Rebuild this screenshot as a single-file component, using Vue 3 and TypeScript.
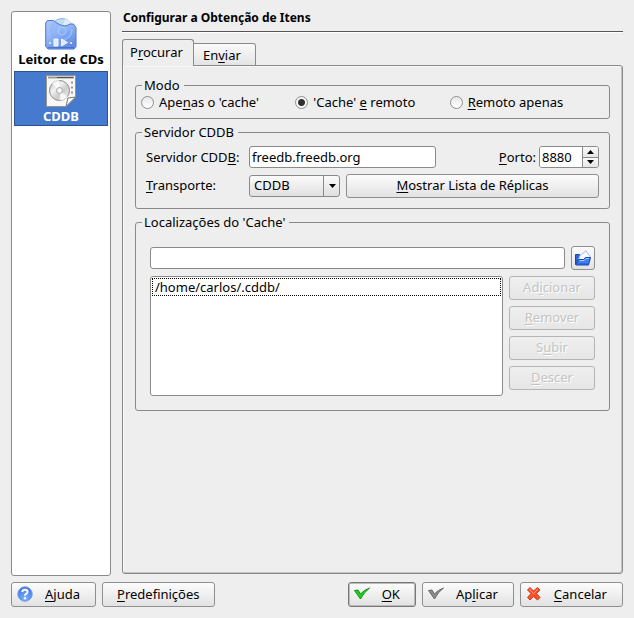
<script setup lang="ts">
import { ref } from 'vue'

interface Mnemonic {
  before: string
  key: string
  after: string
}

interface ModeOption extends Mnemonic {
  value: string
}

const modes: ModeOption[] = [
  { value: 'cache', before: 'Ape', key: 'n', after: "as o 'cache'" },
  { value: 'both', before: "'Cache' ", key: 'e', after: ' remoto' },
  { value: 'remote', before: '', key: 'R', after: 'emoto apenas' },
]

const listActions: Mnemonic[] = [
  { before: 'Ad', key: 'i', after: 'cionar' },
  { before: '', key: 'R', after: 'emover' },
  { before: 'S', key: 'u', after: 'bir' },
  { before: '', key: 'D', after: 'escer' },
]

const mode = ref('both')
const server = ref('freedb.freedb.org')
const port = ref(8880)
const transport = ref('CDDB')
const newPath = ref('')
const paths = ref<string[]>(['/home/carlos/.cddb/'])
</script>

<template>
  <div class="dialog">
    <div class="content">
      <nav class="sidebar">
        <button type="button" class="page">
          <svg width="32" height="32" viewBox="0 0 32 32" aria-hidden="true">
            <defs>
              <linearGradient id="folder" x1="0" y1="0" x2="0.5" y2="1">
                <stop offset="0" stop-color="#9fbcf8" />
                <stop offset="0.5" stop-color="#86adf6" />
                <stop offset="1" stop-color="#4a7be0" />
              </linearGradient>
            </defs>
            <circle cx="17" cy="12" r="11.500" fill="#c3ddf5" stroke="#8fb3e2" />
            <path d="M17 12 20 1q6 1 8 6z" fill="#e6f3fc" opacity=".8" />
            <path d="M.7 5 2.500 2.500H8.500L11 4.500q7 4.500 11 3l3-1.500h3.500L31 9.500V28.500L29 31H3L.7 28.500Z" fill="url(#folder)" fill-opacity=".86" stroke="#4d79cf" />
            <circle cx="17" cy="13" r="4" fill="none" stroke="#bcd5ff" opacity=".6" />
            <path d="M27 11q0 9-9 11" fill="none" stroke="#bcd5ff" stroke-width="2" opacity=".45" />
            <path d="M3 29.500H29" stroke="#315fba" opacity=".6" />
            <path d="M9 21h4v7H9zM16.500 21l6 3.500-6 3.500z" fill="#dfe9ff" stroke="#f2f6ff" />
            <path d="M4 24h2v2H4zM25 24h2v2h-2z" fill="#d5e3ff" />
          </svg>
          <span>Leitor de CDs</span>
        </button>
        <button type="button" class="page current" aria-current="page">
          <svg width="32" height="32" viewBox="0 0 32 32" aria-hidden="true">
            <defs>
              <linearGradient id="disc" x1="0" y1="0" x2="1" y2="1">
                <stop offset="0" stop-color="#b4b4b4" />
                <stop offset=".35" stop-color="#f2f2f2" />
                <stop offset=".6" stop-color="#cccccc" />
                <stop offset="1" stop-color="#f7f7f7" />
              </linearGradient>
            </defs>
            <path d="M1.500.5h29V22l-9.500 9.500H1.500Z" fill="#f7f7f5" stroke="#98948c" />
            <path d="M3 2.500h26" stroke="#999" stroke-width="2" />
            <path d="M12 2.500h16" stroke="#555" />
            <path d="M26 7.500h2M26 12.500h2M26 17.500h2" stroke="#999" stroke-width="2" />
            <circle cx="14.500" cy="15.500" r="10" fill="url(#disc)" stroke="#8c8c8c" />
            <path d="M14.500 15.500 7 9q3-4 7-4zM14.500 15.500l8 6q-3 4-7 4z" fill="#fff" opacity=".75" />
            <circle cx="14.500" cy="15.500" r="3" fill="#f0f0f0" stroke="#aaa" />
            <circle cx="14.500" cy="15.500" r="1" fill="#fff" />
            <path d="M21 31.500 23 23l7.500-1Z" fill="#fff" stroke="#777" stroke-linejoin="round" />
          </svg>
          <span>CDDB</span>
        </button>
      </nav>

      <main class="main">
        <h1>Configurar a Obtenção de Itens</h1>
        <div class="tabs" role="tablist">
          <button type="button" role="tab" class="tab active" aria-selected="true">P<u>r</u>ocurar</button>
          <button type="button" role="tab" class="tab" aria-selected="false">En<u>v</u>iar</button>
        </div>
        <div class="panel" role="tabpanel">
          <fieldset>
            <legend>Modo</legend>
            <div class="modes">
              <label v-for="m in modes" :key="m.value" class="mode">
                <input v-model="mode" type="radio" name="mode" :value="m.value" />
                <span>{{ m.before }}<u>{{ m.key }}</u>{{ m.after }}</span>
              </label>
            </div>
          </fieldset>

          <fieldset>
            <legend>Servidor CDDB</legend>
            <div class="server">
              <label class="caption" for="server">Servidor CDD<u>B</u>:</label>
              <div class="line spread">
                <input id="server" v-model="server" type="text" class="field host" />
                <div class="port">
                  <label for="port"><u>P</u>orto:</label>
                  <div class="spin">
                    <input id="port" v-model.number="port" type="text" inputmode="numeric" />
                    <div class="steps">
                      <button type="button" aria-label="Aumentar" @click="port++">
                        <svg width="7" height="4" viewBox="0 0 7 4"><path d="M3.500 0 7 4H0Z" /></svg>
                      </button>
                      <button type="button" aria-label="Diminuir" @click="port--">
                        <svg width="7" height="4" viewBox="0 0 7 4"><path d="M0 0H7L3.500 4Z" /></svg>
                      </button>
                    </div>
                  </div>
                </div>
              </div>
              <label class="caption" for="transport"><u>T</u>ransporte:</label>
              <div class="line">
                <div class="combo">
                  <select id="transport" v-model="transport">
                    <option>CDDB</option>
                    <option>HTTP</option>
                  </select>
                  <svg width="7" height="4" viewBox="0 0 7 4" aria-hidden="true"><path d="M0 0H7L3.500 4Z" /></svg>
                </div>
                <button type="button" class="btn grow"><span><u>M</u>ostrar Lista de Réplicas</span></button>
              </div>
            </div>
          </fieldset>

          <fieldset>
            <legend>Localizações do 'Cache'</legend>
            <div class="cache">
              <div class="line">
                <input v-model="newPath" type="text" class="field grow" aria-label="Localização" />
                <button type="button" class="btn open" aria-label="Abrir pasta">
                  <svg width="16" height="16" viewBox="0 0 16 16" aria-hidden="true">
                    <path d="M.5 14.500V4.500h4L6 6h8v5Z" fill="#2f66d6" stroke="#1c46ad" />
                    <path d="M3.500 9.500 5 5.500 11 .8 15 6.500 13 10Z" fill="#f6f9ff" stroke="#a9bde2" />
                    <path d="M1 15 3.500 9.500H8.500L10.500 7.500H15.500L13.500 15Z" fill="#3f80ee" stroke="#1744b4" stroke-linejoin="round" />
                    <path d="M4.500 10.500H9L11 8.500H14" fill="none" stroke="#a5ccff" />
                    <path d="M2.500 14H13" stroke="#1f55c8" />
                  </svg>
                </button>
              </div>
              <div class="line stretch">
                <ul class="list" role="listbox" aria-label="Localizações do 'Cache'">
                  <li v-for="p in paths" :key="p" role="option">{{ p }}</li>
                </ul>
                <div class="actions">
                  <button v-for="a in listActions" :key="a.key" type="button" class="btn" disabled>
                    <span>{{ a.before }}<u>{{ a.key }}</u>{{ a.after }}</span>
                  </button>
                </div>
              </div>
            </div>
          </fieldset>
        </div>
      </main>
    </div>

    <footer class="footer">
      <button type="button" class="btn cmd">
        <svg width="16" height="16" viewBox="0 0 16 16" aria-hidden="true">
          <defs>
            <radialGradient id="help" cx=".5" cy=".8" r=".8">
              <stop offset="0" stop-color="#79b2ff" />
              <stop offset="1" stop-color="#3f70e6" />
            </radialGradient>
          </defs>
          <circle cx="8" cy="8" r="7.200" fill="url(#help)" stroke="#6f97e6" />
          <path d="M5.300 6Q5.500 3.800 8 3.800T10.500 6Q10.500 7.200 9 8 8 8.600 8 9.800" fill="none" stroke="#fff" stroke-width="2" />
          <circle cx="8" cy="12.200" r="1.200" fill="#fff" />
        </svg>
        <span><u>A</u>juda</span>
      </button>
      <button type="button" class="btn plain"><span><u>P</u>redefinições</span></button>
      <div class="spacer"></div>
      <button type="button" class="btn cmd default">
        <svg width="16" height="16" viewBox="0 0 16 16" aria-hidden="true">
          <path d="M.5 4.500 4 4l2.500 4Q10 4 15.500 2 10 6 6.500 13Z" fill="#1bd51b" stroke="#138c13" stroke-linejoin="round" />
        </svg>
        <span><u>O</u>K</span>
      </button>
      <button type="button" class="btn cmd">
        <svg width="16" height="16" viewBox="0 0 16 16" aria-hidden="true">
          <path d="M.5 4.500 4 4l2.500 4Q10 4 15.500 2 10 6 6.500 13Z" fill="#8c8c8c" stroke="#666" stroke-linejoin="round" />
        </svg>
        <span>Ap<u>l</u>icar</span>
      </button>
      <button type="button" class="btn cmd">
        <svg width="16" height="16" viewBox="0 0 16 16" aria-hidden="true">
          <path d="M1.500 4 4 1.500 7.500 5 11.500 1.500 14 4 10.500 7.500 14 11.500 11.500 14 7.500 10.500 4 14 1.500 11.500 5 7.500Z" fill="#ff5028" stroke="#d5391b" stroke-linejoin="round" />
          <path d="M3.500 3.500 7.500 7.500 12 3" fill="none" stroke="#ff9d78" />
        </svg>
        <span><u>C</u>ancelar</span>
      </button>
    </footer>
  </div>
</template>

<style>
body {
  background: #eeeeee;
}
</style>

<style scoped>
.dialog,
.dialog * {
  box-sizing: border-box;
}

.dialog {
  display: flex;
  flex-direction: column;
  gap: 6px;
  min-height: 100vh;
  padding: 11px;
  background: #eeeeee;
  color: #000;
  font: 13px/18px "Noto Sans", "DejaVu Sans", sans-serif;
  white-space: nowrap;
}

button,
input,
select {
  margin: 0;
  padding: 0;
  font: inherit;
  color: inherit;
}

u {
  text-underline-offset: 2px;
  text-decoration-skip-ink: none;
}

.content {
  display: flex;
  flex: 1;
  gap: 11px;
}

.sidebar {
  display: flex;
  flex-direction: column;
  flex: none;
  width: 100px;
  padding: 2px;
  border: 1px solid #8a8a8a;
  border-radius: 3px;
  background: #fff;
}

.page {
  display: flex;
  flex-direction: column;
  align-items: center;
  height: 57px;
  padding-top: 4px;
  border: 0;
  background: none;
  font-weight: bold;
}

.page.current {
  height: 55px;
  padding-top: 3px;
  border: 1px solid #2e5389;
  background: #457acf;
  color: #fff;
}

.main {
  display: flex;
  flex-direction: column;
  flex: 1;
  min-width: 0;
  padding-bottom: 2px;
}

h1 {
  margin: 0 0 7px;
  padding: 0 1px 6px;
  border-bottom: 1px solid #555;
  box-shadow: 0 1px #fff;
  font-size: 12px;
  line-height: 14px;
}

.tabs {
  display: flex;
  align-items: flex-end;
}

.tab {
  height: 23px;
  margin-bottom: -1px;
  padding: 0 14px 0 9px;
  border: 1px solid #8a8a8a;
  border-left: 0;
  border-radius: 0 3px 0 0;
  background: linear-gradient(#fafafa, #e4e4e4);
}

.tab.active {
  z-index: 1;
  height: 27px;
  padding: 0 10px 2px 7px;
  border-left: 1px solid #8a8a8a;
  border-bottom: 0;
  border-radius: 3px 3px 0 0;
  background: #eeeeee;
}

.panel {
  display: flex;
  flex-direction: column;
  flex: 1;
  gap: 4px;
  padding: 10px 12px;
  border: 1px solid #8a8a8a;
  border-radius: 0 3px 3px 3px;
  box-shadow: inset -1px -1px #c4c4c4, inset 1px 1px #f8f8f8;
}

fieldset {
  min-width: 0;
  margin: 0;
  padding: 0;
  border: 1px solid #8a8a8a;
  border-radius: 3px;
}

legend {
  margin-left: 6px;
  padding: 0 4px 0 2px;
}

.modes {
  display: grid;
  grid-template-columns: repeat(3, 1fr);
  height: 24px;
  padding: 0 5px;
}

.mode {
  display: flex;
  align-items: center;
  gap: 5px;
  height: 16px;
}

input[type="radio"] {
  appearance: none;
  width: 13px;
  height: 13px;
  border: 1px solid #8f8f8f;
  border-radius: 50%;
  background: linear-gradient(#e8e8e8, #fff);
}

input[type="radio"]:checked {
  background: radial-gradient(circle, #303030 3px, #f6f6f6 4px);
}

.server {
  display: grid;
  grid-template-columns: 103px 1fr;
  row-gap: 6px;
  padding: 5px 10px 10px;
}

.caption {
  line-height: 22px;
}

.line {
  display: flex;
  align-items: center;
  gap: 6px;
}

.spread {
  justify-content: space-between;
}

.stretch {
  align-items: stretch;
}

.grow {
  flex: 1;
  min-width: 0;
}

.field {
  height: 22px;
  padding: 0 2px;
  border: 1px solid #8a8a8a;
  border-radius: 3px;
  background: #fff;
}

.host {
  width: 187px;
}

.port {
  display: flex;
  align-items: center;
  gap: 3px;
}

.spin {
  display: flex;
  width: 60px;
  height: 22px;
  border: 1px solid #8a8a8a;
  border-radius: 3px;
  overflow: hidden;
}

.spin input {
  flex: 1;
  min-width: 0;
  padding: 0 2px;
  border: 0;
  background: #fff;
}

.steps {
  display: flex;
  flex-direction: column;
  width: 16px;
  border-left: 1px solid #8a8a8a;
}

.steps button {
  display: flex;
  flex: 1;
  align-items: center;
  justify-content: center;
  border: 0;
  background: linear-gradient(#fafafa, #e6e6e6);
}

.steps button + button {
  border-top: 1px solid #8a8a8a;
}

.combo {
  display: grid;
  grid-template-columns: 1fr 16px;
  align-items: center;
  justify-items: center;
  width: 91px;
}

.combo select {
  grid-area: 1 / 1 / 2 / 3;
  appearance: none;
  width: 100%;
  height: 22px;
  padding: 0 0 2px 4px;
  border: 1px solid #8a8a8a;
  border-radius: 3px;
  background: linear-gradient(#8a8a8a, #8a8a8a) right 15px top / 1px 100% no-repeat, linear-gradient(#fbfbfb, #e0e0e0);
}

.combo svg {
  grid-area: 1 / 2;
  pointer-events: none;
}

.btn {
  display: flex;
  align-items: center;
  justify-content: center;
  height: 24px;
  padding-bottom: 2px;
  border: 1px solid #8f8f8f;
  border-radius: 3px;
  background: linear-gradient(#fcfcfc, #e2e2e2);
}

.btn:disabled {
  border-color: #b4b4b4;
  background: linear-gradient(#efefef, #e6e6e6);
  color: #c4c4c4;
  text-shadow: 1px 1px #fff;
}

.cache {
  display: flex;
  flex-direction: column;
  gap: 6px;
  padding: 15px 14px 14px;
}

.open {
  width: 24px;
  padding: 0;
}

.list {
  flex: 1;
  min-width: 0;
  margin: 0;
  padding: 1px;
  border: 1px solid #8a8a8a;
  border-radius: 3px;
  background: #fff;
  list-style: none;
}

.list li {
  padding: 0 2px;
  border: 1px dotted #000;
  line-height: 16px;
}

.actions {
  display: grid;
  grid-template-rows: repeat(4, 24px);
  gap: 6px;
  width: 86px;
  padding-bottom: 6px;
}

.footer {
  display: flex;
  gap: 6px;
}

.footer .btn {
  height: 25px;
}

.cmd {
  gap: 12px;
  padding: 0 15px 2px 5px;
}

.plain {
  padding: 0 14px 2px;
}

.default {
  border-color: #777;
  box-shadow: inset 0 0 0 1px #bbb;
}

.spacer {
  flex: 1;
}
</style>
